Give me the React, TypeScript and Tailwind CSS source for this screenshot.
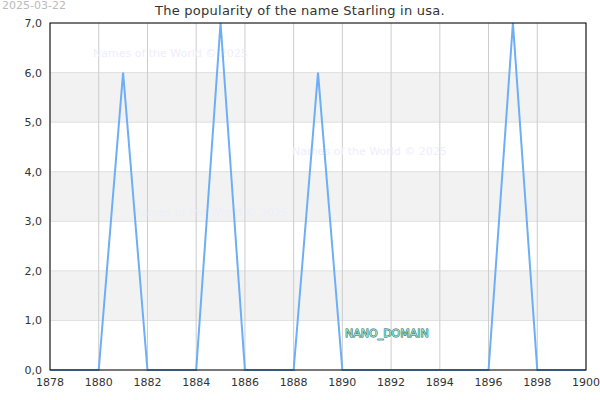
const X0 = 50, X1 = 586, Y0 = 23, Y1 = 370;
const xs = (yr: number) => X0 + ((yr - 1878) / 22) * (X1 - X0);
const ys = (v: number) => Y1 - (v / 7) * (Y1 - Y0);

const data: [number, number][] = [
  [1878, 0], [1880, 0], [1881, 6], [1882, 0], [1884, 0], [1885, 7], [1886, 0],
  [1888, 0], [1889, 6], [1890, 0], [1896, 0], [1897, 7], [1898, 0], [1900, 0],
];

const font = '"DejaVu Sans", sans-serif';

export default function App() {
  const years = Array.from({ length: 12 }, (_, i) => 1878 + i * 2);
  const vals = [0, 1, 2, 3, 4, 5, 6, 7];
  return (
    <div className="relative w-[600px] h-[400px] bg-white" style={{ fontFamily: font }}>
      <svg width={600} height={400} className="absolute left-0 top-0">
        {[1, 3, 5].map((v) => (
          <rect key={v} x={X0} y={ys(v + 1)} width={X1 - X0} height={ys(v) - ys(v + 1)} fill="#f2f2f2" />
        ))}
        {vals.map((v) => (
          <line key={v} x1={X0} x2={X1} y1={ys(v)} y2={ys(v)} stroke="#e0e0e0" />
        ))}
        {years.map((y) => (
          <line key={y} x1={xs(y)} x2={xs(y)} y1={Y0} y2={Y1} stroke="#cccccc" />
        ))}
        <g fill="#eeeefc" fontSize={11} fontFamily={font}>
          <text x={93} y={57}>Names of the World © 2025</text>
          <text x={292} y={155}>Names of the World © 2025</text>
          <text x={133} y={216}>Names of the World © 2025</text>
        </g>
        <polyline
          points={data.map(([x, v]) => `${xs(x)},${ys(v)}`).join(' ')}
          fill="none"
          stroke="#6eaef5"
          strokeWidth={2}
        />
        <rect x={X0} y={Y0} width={X1 - X0} height={Y1 - Y0} fill="none" stroke="#000" />
        <text x={345} y={337} fontSize={11} fontFamily={font} fill="#a6e0d2" stroke="#0a5f55" strokeWidth={0.9} paintOrder="stroke">
          NANO_DOMAIN
        </text>
        <g fontSize={11} fill="#333" fontFamily={font}>
          {vals.map((v) => (
            <text key={v} x={42} y={ys(v) + 4} textAnchor="end">{v.toFixed(1).replace('.', ',')}</text>
          ))}
          {years.map((y) => (
            <text key={y} x={xs(y)} y={386} textAnchor="middle">{y}</text>
          ))}
        </g>
        <text x={2} y={9} fontSize={11} fill="#bbb" fontFamily={font}>2025-03-22</text>
        <text x={300} y={15} fontSize={13} fill="#333" textAnchor="middle" fontFamily={font} letterSpacing={0.25}>
          The popularity of the name Starling in usa.
        </text>
      </svg>
    </div>
  );
}
